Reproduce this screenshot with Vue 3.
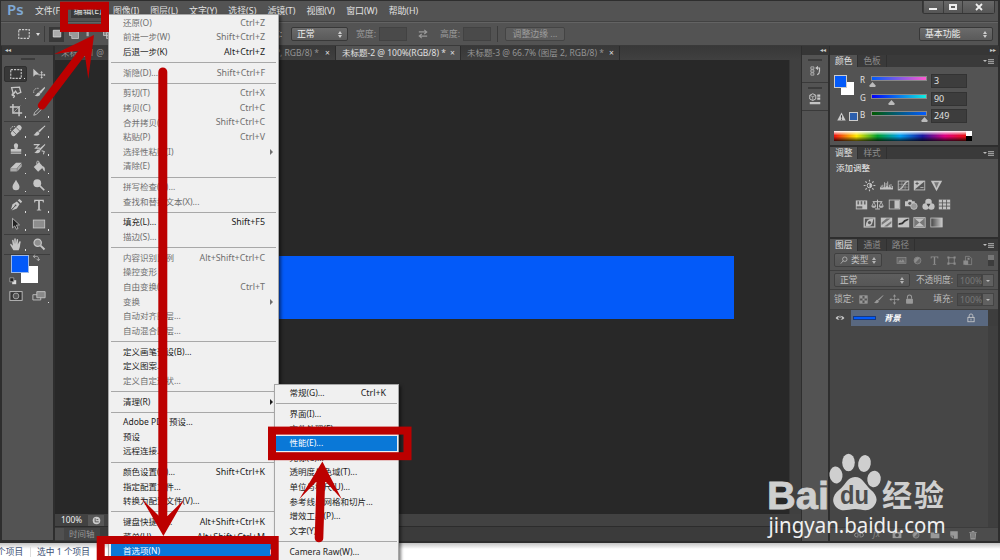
<script setup>
import { ref } from 'vue';

const menus = ['文件(F)', '编辑(E)', '图像(I)', '图层(L)', '文字(Y)', '选择(S)', '滤镜(T)', '视图(V)', '窗口(W)', '帮助(H)'];
const openMenu = ref('编辑(E)');

// off: disabled, sub: has a submenu, null: separator
const editMenu = [
  { text: '还原(O)', key: 'Ctrl+Z', off: true },
  { text: '前进一步(W)', key: 'Shift+Ctrl+Z', off: true },
  { text: '后退一步(K)', key: 'Alt+Ctrl+Z' },
  null,
  { text: '渐隐(D)...', key: 'Shift+Ctrl+F', off: true },
  null,
  { text: '剪切(T)', key: 'Ctrl+X', off: true },
  { text: '拷贝(C)', key: 'Ctrl+C', off: true },
  { text: '合并拷贝(Y)', key: 'Shift+Ctrl+C', off: true },
  { text: '粘贴(P)', key: 'Ctrl+V', off: true },
  { text: '选择性粘贴(I)', off: true, sub: true },
  { text: '清除(E)', off: true },
  null,
  { text: '拼写检查(H)...', off: true },
  { text: '查找和替换文本(X)...', off: true },
  null,
  { text: '填充(L)...', key: 'Shift+F5' },
  { text: '描边(S)...', off: true },
  null,
  { text: '内容识别比例', key: 'Alt+Shift+Ctrl+C', off: true },
  { text: '操控变形', off: true },
  { text: '自由变换(F)', key: 'Ctrl+T', off: true },
  { text: '变换', off: true, sub: true },
  { text: '自动对齐图层...', off: true },
  { text: '自动混合图层...', off: true },
  null,
  { text: '定义画笔预设(B)...' },
  { text: '定义图案...' },
  { text: '定义自定形状...', off: true },
  null,
  { text: '清理(R)', sub: true },
  null,
  { text: 'Adobe PDF 预设...' },
  { text: '预设' },
  { text: '远程连接...' },
  null,
  { text: '颜色设置(G)...', key: 'Shift+Ctrl+K' },
  { text: '指定配置文件...' },
  { text: '转换为配置文件(V)...' },
  null,
  { text: '键盘快捷键...', key: 'Alt+Shift+Ctrl+K' },
  { text: '菜单(U)...', key: 'Alt+Shift+Ctrl+M' },
  { text: '首选项(N)', sub: true, active: true },
];

const prefMenu = [
  { text: '常规(G)...', key: 'Ctrl+K' },
  null,
  { text: '界面(I)...' },
  { text: '文件处理(F)...' },
  { text: '性能(E)...', active: true },
  { text: '光标(C)...' },
  { text: '透明度与色域(T)...' },
  { text: '单位与标尺(U)...' },
  { text: '参考线、网格和切片...' },
  { text: '增效工具(P)...' },
  { text: '文字(Y)...' },
  null,
  { text: 'Camera Raw(W)...' },
];

const icons = {
  marquee: '<rect x="2" y="3" width="12" height="10" fill="none" stroke="currentColor" stroke-width="1.300" stroke-dasharray="2.500 1.200"/>',
  move: '<path d="M1.500 2v9l2.300-2.200L8.500 8.500z" fill="currentColor"/><path d="M11 5.500v7M7.500 9h7" stroke="currentColor" stroke-width="1"/><path d="M11 4.500l1.500 2h-3zM11 13.500l1.500-2h-3zM15.500 9l-2-1.500v3z" fill="currentColor"/>',
  lasso: '<path d="M3 3l9-.5 1.500 6-4 1.500-2-3-2.500 3.500zM5 10c-2 0-2 2 0 2s1.500 2-.5 2.500" fill="none" stroke="currentColor" stroke-width="1.500"/>',
  quick: '<path d="M14.500 2L8 8l2 2 5-6.500z" fill="currentColor"/><path d="M8.500 8.500c-3-.5-3 3-5.500 3.500 3 2 6.500.5 6.500-2z" fill="currentColor"/><path d="M2 9c-1-4 3-6 6-5" fill="none" stroke="currentColor" stroke-dasharray="1.500 1"/>',
  crop: '<path d="M4.500 1v10.500H15M1 4.500h10.500V15" fill="none" stroke="currentColor" stroke-width="1.700"/><path d="M5 11l8-8" stroke="currentColor" stroke-width=".7"/>',
  dropper: '<path d="M2 14l1-3 6-6 2 2-6 6z" fill="none" stroke="currentColor"/><path d="M8.500 4.500l1-.8L12 1.500c1.500-1 3.500 1 2.200 2.400L12 6l-.5 1.200z" fill="currentColor"/>',
  heal: '<g transform="rotate(-45 8 8)"><rect x="1" y="5" width="15" height="6" rx="3" fill="currentColor"/><path d="M5.500 5v6M11 5v6" stroke="#555" stroke-width=".8"/></g><path d="M2 8c-1-3 1-6 5-5" fill="none" stroke="currentColor" stroke-dasharray="1.500 1"/>',
  brush: '<path d="M15 1.500L7 8l1.500 1.800L15 2.500z" fill="currentColor"/><path d="M7 8.500c-3-.3-2.500 3-5.500 4 3.500 2 7 .5 7-2z" fill="currentColor"/>',
  stamp: '<path d="M8 1.500a2.500 2.500 0 012.300 3.300L9.500 8H14v3H2V8h4.500l-.8-3.200A2.500 2.500 0 018 1.500zM2 12h12v1.500H2z" fill="currentColor"/>',
  history: '<path d="M15 2L8 8l1.500 1.800L15 3.500zM8 8.500c-3-.3-2.500 2.500-5.500 3.500 3.500 2 7 .5 7-2z" fill="currentColor"/><path d="M2 3h6L4 7h5M11 10l3 1-1 3" fill="none" stroke="currentColor" stroke-width="1.200"/>',
  eraser: '<path d="M1.500 9.500L8 3h6.500L9 9.500z" fill="currentColor"/><path d="M1.500 9.500H9V13H1.500zM9.500 9.500L14.500 4v3.500L9.500 13z" fill="currentColor" opacity=".75"/>',
  bucket: '<path d="M2 8l6-5.500 5 5.500-6 5.500z" fill="currentColor"/><path d="M8 7V2.500C8 .8 5.500.8 5.500 2.500V5" fill="none" stroke="currentColor"/><path d="M12 7c3 1 3 3 2.500 6-1.500-1-2-3-3-4z" fill="currentColor"/>',
  blur: '<path d="M8 2c1 3 4 5 4 8a4 4 0 01-8 0c0-3 3-5 4-8z" fill="currentColor"/>',
  dodge: '<circle cx="6" cy="6" r="4.500" fill="currentColor"/><path d="M9 9l5 5" stroke="currentColor" stroke-width="2"/>',
  pen: '<path d="M2 14L4 7l5-3 3 3-3 5-6 2.300L7.500 9" fill="currentColor"/><path d="M10 2.500l3.500 3.500L15 4 12 1z" fill="currentColor"/><path d="M2 14l5-5" stroke="#555"/><circle cx="7.500" cy="8.500" r="1" fill="#555"/>',
  type: '<path d="M2.500 2h11v3h-1l-.5-1.700H9V13l1.500.5v.7h-5v-.7L7 13V3.300H4L3.500 5h-1z" fill="currentColor"/>',
  select: '<path d="M4 1.500v11l2.500-2.300L8.500 14l1.800-.9-1.800-3.800L12 9z" fill="#222" stroke="currentColor" stroke-width=".9"/>',
  rect: '<rect x="1.500" y="3.500" width="13" height="9" fill="#8d8d8d" stroke="currentColor"/>',
  hand: '<path d="M5 15L1.500 9c-.5-1.500 1-1.500 1.500-.5L4.500 10 3.500 4c0-1.300 1.500-1.300 1.700 0l.8 4V2.500c0-1.300 1.800-1.300 1.800 0V8l.9-5c.3-1.300 1.800-1 1.700.3L10 8.500l1.800-3.300c.7-1 1.900-.3 1.500.8C12.500 8.500 13 12 11 15z" fill="currentColor"/>',
  zoom: '<circle cx="6.500" cy="6.500" r="4.200" fill="#8f8f8f" stroke="currentColor" stroke-width="1.400"/><path d="M9.800 9.800l4.500 4.500" stroke="currentColor" stroke-width="2.200"/>',
  quickmask: '<rect x="1" y="3" width="14" height="10" fill="#353535" stroke="currentColor"/><circle cx="8" cy="8" r="3.300" fill="#555" stroke="currentColor" stroke-width=".8"/>',
  screen: '<path d="M1 6.500h9v6H1z" fill="#555" stroke="currentColor"/><path d="M5.500 3h9.500v7H5.500z" fill="#888" stroke="currentColor"/>',
  sun: '<circle cx="8" cy="8" r="2.800" fill="none" stroke="currentColor" stroke-width="1.200"/><path d="M8 5.200v5.600a2.800 2.800 0 000-5.600z" fill="currentColor"/><path d="M8 .8v2.400M8 12.800v2.400M.8 8h2.400M12.800 8h2.400M3 3l1.600 1.600M11.400 11.400L13 13M13 3l-1.600 1.600M4.600 11.400L3 13" stroke="currentColor" stroke-width="1.400"/>',
  levels: '<path d="M0 13h16V8.500h-1V11h-1V6h-1v4h-1V7h-1v3h-1V3H9v6H8V5H7v5H6V4H5v6H4V7H3v4H2V8H1v2H0z" fill="currentColor"/>',
  curves: '<rect x="1.500" y="2.500" width="13" height="11" fill="none" stroke="currentColor"/><path d="M6 3v10M10 3v10M2 6.500h12M2 10h12" stroke="currentColor" stroke-width=".5"/><path d="M2 13c6 0 6-10 12-10" fill="none" stroke="currentColor" stroke-width="1.400"/>',
  exposure: '<path d="M1 2h14v12H1z" fill="currentColor"/><path d="M14 3v10H2z" fill="#555"/><path d="M3 5.500h4M5 3.500v4" stroke="#555" stroke-width="1.200"/><path d="M9 10.500h4" stroke="currentColor"/>',
  vibrance: '<path d="M1 2h14L8 15z" fill="currentColor"/><path d="M5 4h6l-3 7z" fill="#777"/>',
  hue: '<rect x="1" y="3" width="14" height="11" fill="currentColor"/><path d="M3 4h2v4H3zM7 4h2v4H7zM11 4h2v4h-2zM2 10h7v3H2z" fill="#666"/>',
  balance: '<path d="M8 2v11M2 4.500h12M5 13.500h6" stroke="currentColor" stroke-width="1.200"/><path d="M3.500 5L1 10h5zM12.500 5L10 10h5z" fill="none" stroke="currentColor"/><path d="M.5 10h6c-1 2.500-5 2.500-6 0zM9.500 10h6c-1 2.500-5 2.500-6 0z" fill="currentColor"/>',
  bw: '<rect x="1.500" y="2.500" width="13" height="11" fill="#555" stroke="currentColor"/><path d="M8 3h6v10H8z" fill="currentColor"/>',
  photo: '<path d="M0 4h3l1-2h4l1 2h3v6H0z" fill="currentColor"/><circle cx="6" cy="6.500" r="2" fill="#555"/><circle cx="11" cy="10" r="4" fill="#999" stroke="currentColor"/>',
  mixer: '<circle cx="8" cy="5" r="4" fill="currentColor"/><circle cx="4.500" cy="10.500" r="4" fill="currentColor"/><circle cx="11.500" cy="10.500" r="4" fill="currentColor"/><path d="M5.500 7h5L8 11z" fill="#444"/>',
  lookup: '<rect x="1" y="2" width="14" height="12" fill="currentColor"/><path d="M5.500 2v12M10.500 2v12M1 6h14M1 10h14" stroke="#555"/>',
  invert: '<rect x="1.500" y="2.500" width="13" height="11" fill="#555" stroke="currentColor" stroke-width="1.600"/><path d="M13 3v1c-1 1-1 7-4 8-2 1-4 0-6 1 1-2 0-4 2-7 2-3 5-2 8-3z" fill="currentColor"/><circle cx="8" cy="8" r="2" fill="#555"/>',
  poster: '<rect x="1" y="2" width="14" height="12" fill="currentColor"/><path d="M2 8l6-5h5L2 11zM5 13l9-7v3l-5 4z" fill="#777"/>',
  threshold: '<rect x="1" y="2" width="14" height="12" fill="currentColor"/><path d="M2 9l4-1 3-3 5-2v2l-4 2-3 3-5 1z" fill="#333"/>',
  selective: '<rect x="1" y="2" width="14" height="12" fill="#777" stroke="currentColor"/><path d="M2 3l6 5 6-5M2 13l6-5 6 5z" fill="currentColor"/>',
  gradmap: '<rect x="1" y="2.500" width="14" height="11" fill="url(#gm)" stroke="currentColor"/>',
  image: '<rect x="1.500" y="3.500" width="13" height="9" fill="#666" stroke="currentColor"/><path d="M3 11l3-4 2 2 2-3 3 5z" fill="currentColor"/>',
  adjust: '<circle cx="8" cy="8" r="5" fill="#666" stroke="currentColor"/><path d="M4.500 11.500a5 5 0 017-7z" fill="currentColor"/>',
  shape: '<rect x="4" y="4" width="8" height="8" fill="none" stroke="currentColor" stroke-width="1.200"/><path d="M2 2h3v3H2zM11 2h3v3h-3zM2 11h3v3H2zM11 11h3v3h-3z" fill="currentColor"/>',
  smart: '<path d="M5 2h6l3 3v9H5z" fill="none" stroke="currentColor"/><path d="M2 8h7v6H2zM8 4h3v3H8z" fill="currentColor"/>',
  pixels: '<rect x="2.500" y="2.500" width="11" height="11" fill="none" stroke="currentColor"/><path d="M3 3h3.500v3.500H3zM9.500 3H13v3.500H9.500zM6.500 6.500h3v3h-3zM3 9.500h3.500V13H3zM9.500 9.500H13V13H9.500z" fill="currentColor"/>',
  cross: '<path d="M8 2v12M2 8h12" stroke="currentColor"/><path d="M8 .5l2.300 3H5.700zM8 15.500l2.300-3H5.700zM.5 8l3-2.300v4.600zM15.500 8l-3-2.300v4.600z" fill="currentColor"/>',
  lock: '<rect x="3" y="7" width="10" height="7" rx="1" fill="currentColor"/><path d="M5 7V4.500a3 3 0 016 0V7" fill="none" stroke="currentColor" stroke-width="1.500"/>',
  lockline: '<rect x="3" y="7" width="10" height="7" fill="none" stroke="currentColor" stroke-width="1.300"/><path d="M5 7V4.500a3 3 0 016 0V7M8 9v3" fill="none" stroke="currentColor" stroke-width="1.300"/>',
  eye: '<path d="M1 8c3-5 11-5 14 0-3 4.500-11 4.500-14 0z" fill="currentColor"/><circle cx="8" cy="8" r="3" fill="#444"/><circle cx="8" cy="7" r="1" fill="currentColor"/>',
  link: '<path d="M7 5H4a3 3 0 000 6h3M9 5h3a3 3 0 010 6H9M5 8h6" fill="none" stroke="currentColor" stroke-width="1.400"/>',
  mask: '<path d="M1 3h14v10H1z" fill="currentColor"/><circle cx="8" cy="8" r="3" fill="#4a4a4a"/>',
  folder: '<path d="M1 4h5l1 1.500h8V13H1z" fill="currentColor"/>',
  newlayer: '<path d="M2 2h12v12H8V9H2z" fill="currentColor"/><path d="M2 10h5v4z" fill="currentColor"/>',
  trash: '<path d="M3 5h10l-1 10H4zM2 3h12v1.300H2zM6 1.500h4V3H6z" fill="currentColor"/><path d="M6 6v7M8 6v7M10 6v7" stroke="#4a4a4a" stroke-width=".7"/>',
  historypanel: '<path d="M2.500 2.500h4v3h-4zM2.500 6.500h4v3h-4zM2.500 10.500h4v3h-4z" fill="none" stroke="currentColor"/><path d="M9 4h5v4c0 3-1 4-3 5" fill="none" stroke="currentColor" stroke-width="1.600"/><path d="M12 1L8.500 4 12 7z" fill="currentColor"/>',
  props: '<path d="M5 1l4 2v5L5 10 1 8V3z" fill="none" stroke="currentColor" stroke-width="1.300"/><path d="M1 3l4 2 4-2M5 5v5" fill="none" stroke="currentColor"/><path d="M11 2h4v3h-4zM11 6h4v3h-4zM1 12h14v3H1z" fill="currentColor"/>',
};

const toolGroups = [
  ['marquee', 'move', 'lasso', 'quick', 'crop', 'dropper'],
  ['heal', 'brush', 'stamp', 'history', 'eraser', 'bucket', 'blur', 'dodge'],
  ['pen', 'type', 'select', 'rect'],
  ['hand', 'zoom'],
];

const channels = ref([
  { name: 'R', value: 3, max: 255 },
  { name: 'G', value: 90, max: 255 },
  { name: 'B', value: 249, max: 255 },
]);

const adjustments = [
  ['sun', 'levels', 'curves', 'exposure', 'vibrance'],
  ['hue', 'balance', 'bw', 'photo', 'mixer', 'lookup'],
  ['invert', 'poster', 'threshold', 'selective', 'gradmap'],
];
</script>

<template>
  <div class="desktop">
    <div class="app">
      <header class="menubar">
        <span class="logo">Ps</span>
        <nav>
          <span v-for="m in menus" :key="m" :class="{ open: m === openMenu }">{{ m }}</span>
        </nav>
        <div class="winbtns">
          <i><svg viewBox="0 0 10 8"><path d="M1 5h8v2H1z" fill="#eee" /></svg></i>
          <i><svg viewBox="0 0 10 8"><path d="M2 2h6v4H2z" fill="none" stroke="#eee" stroke-width="2" /></svg></i>
          <i class="wide"><svg viewBox="0 0 10 8"><path d="M2 1l6 6M8 1L2 7" stroke="#eee" stroke-width="1.800" /></svg></i>
        </div>
      </header>

      <div class="options">
        <svg class="opt-tool" viewBox="0 0 16 16" v-html="icons.marquee"></svg>
        <b class="caret"></b>
        <i class="vline"></i>
        <div class="modes">
          <i class="on"><svg viewBox="0 0 16 16"><path d="M3 3h10v9H3z" fill="#aaa" stroke="#ddd" /></svg></i>
          <i><svg viewBox="0 0 16 16"><path d="M2 2h9v3h3v9H5v-4H2z" fill="#999" stroke="#ccc" /></svg></i>
          <i><svg viewBox="0 0 16 16"><path d="M2 2h8v2H5v7H2z" fill="#aaa" /></svg></i>
          <i><svg viewBox="0 0 16 16"><path d="M2 2h8v8H2zM6 6h8v8H6z" fill="#888" stroke="#ccc" /></svg></i>
        </div>
        <span class="style-label">样式:</span>
        <span class="select normal">正常<em class="ud"></em></span>
        <span class="dim w-label">宽度:</span>
        <i class="field"></i>
        <svg class="swap" viewBox="0 0 12 12"><path d="M1 3.500h9M7.500 1L10.500 3.500 7.500 6M11 8.500H2M4.500 6L1.500 8.500 4.500 11" fill="none" stroke="#999" stroke-width="1.400" /></svg>
        <span class="dim">高度:</span>
        <i class="field"></i>
        <i class="vline second"></i>
        <span class="edge-btn">调整边缘 ...</span>
        <span class="select workspace">基本功能<em class="ud"></em></span>
      </div>

      <div class="main">
        <aside class="tools">
          <div class="tools-head">◂◂</div>
          <div class="grip"></div>
          <div v-for="(g, gi) in toolGroups" :key="gi" class="tool-group">
            <div v-for="t in g" :key="t" class="tool" :class="{ selected: t === 'marquee' }">
              <svg viewBox="0 0 16 16" v-html="icons[t]"></svg>
              <b v-if="t !== 'move' && t !== 'zoom'"></b>
            </div>
          </div>
          <div class="swatches">
            <i class="bg"></i>
            <i class="fg"></i>
            <svg class="flip" viewBox="0 0 10 10"><path d="M2 3h4c1 0 2 1 2 2v3M4 .8L1.500 3 4 5.200M5.800 6L8 8.500 10 6" fill="none" stroke="#bbb" /></svg>
            <svg class="reset" viewBox="0 0 10 10"><path d="M4 4h5v5H4z" fill="#ddd" /><path d="M1 1h5v5H1z" fill="#222" stroke="#aaa" /></svg>
          </div>
          <div class="tool-group last">
            <div class="tool"><svg viewBox="0 0 16 16" v-html="icons.quickmask"></svg></div>
            <div class="tool"><svg viewBox="0 0 16 16" v-html="icons.screen"></svg><b></b></div>
          </div>
        </aside>

        <section class="document">
          <div class="tabs">
            <div class="tab first"><span>未标题-1 @</span><span>?, RGB/8) *</span><u>×</u></div>
            <div class="tab current"><span>未标题-2 @ 100%(RGB/8) *</span><u>×</u></div>
            <div class="tab third"><span>未标题-3 @ 66.7% (图层 2, RGB/8) *</span><u>×</u></div>
          </div>
          <div class="view">
            <div class="canvas"><div class="art"></div></div>
            <div class="vscroll"></div>
          </div>
          <div class="status">
            <span>100%</span>
            <i><svg viewBox="0 0 10 10"><circle cx="5" cy="5" r="4.200" fill="#ccc" /><path d="M3.500 2.500v4h4M5 4h2" fill="none" stroke="#555" /></svg></i>
          </div>
          <div class="timeline"><i></i><span>时间轴</span></div>
        </section>

        <aside class="dock">
          <div class="dock-head">◂◂</div>
          <div class="dock-cell"><i></i><svg viewBox="0 0 16 16" v-html="icons.historypanel"></svg></div>
          <div class="dock-cell"><i></i><svg viewBox="0 0 16 16" v-html="icons.props"></svg></div>
          <div class="dock-rest"></div>
        </aside>

        <aside class="panels">
          <div class="dock-head right">▸▸</div>

          <div class="panel color">
            <div class="ptabs"><span class="on">颜色</span><span>色板</span><em class="pmenu"></em></div>
            <div class="pbody">
              <div class="color-row">
                <div class="chips">
                  <i class="white"></i>
                  <i class="blue"></i>
                  <svg class="warn" viewBox="0 0 10 10"><path d="M5 .5L9.700 9.500H.3z" fill="#ccc" /><path d="M5 3.500v3M5 7.300v1.200" stroke="#333" stroke-width="1.200" /></svg>
                  <i class="gamut"></i>
                </div>
                <div class="sliders">
                  <div v-for="c in channels" :key="c.name" class="slider">
                    <label>{{ c.name }}</label>
                    <div class="track" :class="c.name.toLowerCase()">
                      <svg class="thumb" viewBox="0 0 8 6" :style="{ left: (c.value / c.max) * 100 + '%' }"><path d="M4 0l3.500 4v2H.5V4z" fill="#bbb" /></svg>
                    </div>
                    <span class="num">{{ c.value }}</span>
                  </div>
                </div>
              </div>
              <div class="ramp"><i class="hues"></i><i class="ends"></i></div>
            </div>
          </div>

          <div class="panel adjust">
            <div class="ptabs"><span class="on">调整</span><span>样式</span><em class="pmenu"></em></div>
            <div class="pbody">
              <p>添加调整</p>
              <div v-for="(row, ri) in adjustments" :key="ri" class="adj-row">
                <svg v-for="a in row" :key="a" viewBox="0 0 16 16" v-html="icons[a]"></svg>
              </div>
            </div>
          </div>

          <div class="panel layers">
            <div class="ptabs"><span class="on">图层</span><span>通道</span><span>路径</span><em class="pmenu"></em></div>
            <div class="lrow filter">
              <span class="select kind"><svg viewBox="0 0 10 10"><circle cx="6" cy="4" r="2.800" fill="none" stroke="#bbb" /><path d="M4 6L1 9.500" stroke="#bbb" /></svg>类型<em class="ud"></em></span>
              <svg v-for="f in ['image', 'adjust', 'type', 'shape', 'smart']" :key="f" viewBox="0 0 16 16" v-html="icons[f]"></svg>
              <i class="toggle"></i>
            </div>
            <div class="lrow">
              <span class="select blend">正常<em class="ud"></em></span>
              <span class="llabel">不透明度:</span>
              <span class="pct">100%</span><b class="drop"></b>
            </div>
            <div class="lrow lockrow">
              <span>锁定:</span>
              <svg v-for="f in ['pixels', 'brush', 'cross', 'lock']" :key="f" viewBox="0 0 16 16" v-html="icons[f]"></svg>
              <span class="llabel">填充:</span>
              <span class="pct">100%</span><b class="drop"></b>
            </div>
            <div class="layer">
              <svg class="eye" viewBox="0 0 16 16" v-html="icons.eye"></svg>
              <div class="layer-main">
                <i class="thumbnail"></i>
                <em>背景</em>
                <svg viewBox="0 0 16 16" v-html="icons.lockline"></svg>
              </div>
              <div class="lscroll"></div>
            </div>
            <div class="layer-empty"><i></i></div>
            <div class="lfoot">
              <svg viewBox="0 0 16 16" v-html="icons.link"></svg>
              <span>fx</span>
              <svg v-for="f in ['mask', 'adjust', 'folder', 'newlayer', 'trash']" :key="f" viewBox="0 0 16 16" v-html="icons[f]"></svg>
            </div>
          </div>
        </aside>
      </div>
    </div>

    <footer class="explorer"><span>个项目</span><i></i><span>选中 1 个项目</span></footer>

    <div class="menu edit">
      <template v-for="(item, i) in editMenu" :key="i">
        <hr v-if="!item">
        <div v-else class="item" :class="{ off: item.off, active: item.active }">
          <span>{{ item.text }}</span>
          <kbd v-if="item.key">{{ item.key }}</kbd>
          <b v-if="item.sub"></b>
        </div>
      </template>
    </div>

    <div class="menu pref">
      <template v-for="(item, i) in prefMenu" :key="i">
        <hr v-if="!item">
        <div v-else class="item" :class="{ active: item.active }">
          <span>{{ item.text }}</span>
          <kbd v-if="item.key">{{ item.key }}</kbd>
        </div>
      </template>
    </div>

    <svg class="overlay" viewBox="0 0 1000 560">
      <defs>
        <linearGradient id="gm"><stop offset="0" stop-color="#444" /><stop offset="1" stop-color="#ccc" /></linearGradient>
      </defs>
      <!-- red marks -->
      <g fill="none" stroke="#bc0000" stroke-width="8">
        <rect x="64" y="5.700" width="41" height="22.300" />
        <rect x="100.700" y="540" width="174" height="20" />
        <rect x="272" y="430.600" width="135.500" height="25.600" />
        <g stroke-linecap="round">
          <path d="M42 105.500L84 50" />
          <path d="M162.800 72V520" stroke-width="9" />
          <path d="M319 538L321 476" stroke-width="8.600" />
        </g>
      </g>
      <g fill="#bc0000">
        <path d="M94 35L54 54.300 79 50.500 85 56 88.300 79z" />
        <path d="M163.400 536L142 499 159 516H167.500L184.300 499.500z" />
        <path d="M322.400 461.500L299.200 499.200 316 482H326L341.800 499.200z" />
      </g>
      <!-- watermark -->
      <g fill="#cfcfcf">
        <text x="767" y="508.500" class="wm-bai" textLength="62" lengthAdjust="spacingAndGlyphs">Bai</text>
        <ellipse cx="836" cy="475" rx="6.500" ry="8.500" transform="rotate(-8 836 475)" />
        <ellipse cx="848.500" cy="462.500" rx="6.300" ry="8.800" />
        <ellipse cx="864.500" cy="463.500" rx="6.300" ry="8.500" transform="rotate(10 864.500 463.500)" />
        <ellipse cx="874" cy="479" rx="6.700" ry="8.300" transform="rotate(8 874 479)" />
        <path d="M855 477c8 0 10 8 16 13 5 4 8 10 3 16-6 7-12 3-19 3s-13 4-19-2c-5-6-3-12 3-17 6-4 8-13 16-13z" />
        <text x="840" y="503.500" class="wm-du" textLength="29" lengthAdjust="spacingAndGlyphs">du</text>
        <text x="882" y="505.500" class="wm-cn" textLength="62">经验</text>
      </g>
      <text x="768.500" y="532.500" class="wm-url" textLength="177" lengthAdjust="spacingAndGlyphs">jingyan.baidu.com</text>
    </svg>
  </div>
</template>

<style>
body {
  background: #fff;
  overflow: hidden;
}
</style>

<style scoped>
* {
  box-sizing: border-box;
}
.desktop {
  position: relative;
  width: 1000px;
  height: 560px;
  overflow: hidden;
  display: flex;
  flex-direction: column;
  font-family: "Noto Sans", "Noto Sans CJK SC", sans-serif;
  font-size: 8.9px;
  line-height: 1;
  color: #e2e2e2;
  white-space: nowrap;
}
svg {
  display: block;
  flex: none;
}
i {
  display: block;
  flex: none;
}
.app {
  height: 543px;
  flex: none;
  display: flex;
  flex-direction: column;
  background: #535353;
  border: solid #2e2e2e;
  border-width: 1px 2px 2px 1px;
}
/* menu bar */
.menubar {
  height: 21px;
  flex: none;
  display: flex;
  border-bottom: 1px solid #424242;
}
.logo {
  width: 34px;
  padding: 1px 0 0 6px;
  font-size: 15px;
  font-weight: 600;
  color: #7fa8d4;
}
.menubar nav {
  display: flex;
  align-items: center;
  gap: 11.150px;
}
.menubar .open {
  background: #3a3a3a;
  box-shadow: 0 0 0 3px #3a3a3a;
}
.winbtns {
  margin-left: auto;
  margin-right: 3px;
  height: 13px;
  display: flex;
  border: 1px solid #353535;
  border-top: 0;
  border-radius: 0 0 3px 3px;
}
.winbtns i {
  width: 19.500px;
  display: flex;
  align-items: center;
  justify-content: center;
  background: linear-gradient(#686868, #565656);
  border-left: 1px solid #3c3c3c;
}
.winbtns i.wide {
  width: 32px;
}
.winbtns svg {
  width: 10px;
  height: 8px;
}
/* options bar */
.options {
  height: 24px;
  flex: none;
  display: flex;
  align-items: center;
  padding-left: 16px;
  border-top: 1px solid #636363;
  border-bottom: 1px solid #3a3a3a;
}
.opt-tool {
  width: 14px;
  height: 14px;
  color: #ccc;
}
.caret {
  margin-left: 5px;
  border: 2px solid transparent;
  border-top: 3px solid #ddd;
  border-bottom: 0;
}
.vline {
  width: 1px;
  height: 16px;
  margin-left: 4px;
  background: #3c3c3c;
}
.modes {
  display: flex;
  gap: 2px;
  margin-left: 4px;
  width: 213px;
}
.modes i {
  width: 15px;
  height: 15px;
  padding: 1.500px;
}
.modes .on {
  background: #383838;
}
.modes svg {
  width: 12px;
  height: 12px;
}
.style-label {
  width: 29px;
}
.select {
  display: flex;
  align-items: center;
  height: 14px;
  padding: 0 4px 0 5px;
  background: linear-gradient(#6b6b6b, #5a5a5a);
  border: 1px solid #383838;
  border-radius: 2px;
  color: #eee;
}
.ud {
  width: 5px;
  height: 7px;
  margin-left: auto;
}
.ud::before,
.ud::after {
  content: "";
  display: block;
  border: 2px solid transparent;
  border-top: 0;
  border-bottom: 3px solid #ccc;
  width: 0;
}
.ud::after {
  margin-top: 1px;
  transform: rotate(180deg);
}
.normal {
  width: 57px;
  margin-right: 8px;
}
.dim {
  color: #9a9a9a;
  width: 23px;
}
.field {
  width: 28px;
  height: 14px;
  background: #4a4a4a;
  border: 1px solid #424242;
}
.swap {
  width: 10px;
  height: 10px;
  margin: 0 12px 0 11px;
}
.second {
  margin-left: 6px;
}
.edge-btn {
  width: 60px;
  height: 14px;
  margin-left: 7px;
  display: flex;
  align-items: center;
  justify-content: center;
  border: 1px solid #444;
  border-radius: 2px;
  background: #5c5c5c;
  color: #9c9c9c;
}
.workspace {
  width: 74px;
  margin-left: auto;
  margin-right: 5px;
}
/* work area */
.main {
  flex: 1;
  min-height: 0;
  display: flex;
  background: #2e2e2e;
}
.tools {
  width: 51px;
  margin: 0 2px 1px 1px;
  background: #535353;
}
.tools-head,
.dock-head {
  height: 9px;
  background: #363636;
  color: #ccc;
  font-size: 6px;
  line-height: 8px;
  padding-left: 3px;
}
.grip {
  width: 14px;
  height: 2px;
  margin: 3px auto 5px;
  background: #3c3c3c;
}
.tool-group {
  display: grid;
  grid-template-columns: 23px 23px;
  grid-auto-rows: 18.200px;
  margin: 0 3px 0 2px;
  padding-bottom: 1px;
  border-bottom: 1px solid #3d3d3d;
}
.tool {
  position: relative;
  display: flex;
  align-items: center;
  justify-content: center;
  color: #c6c6c6;
}
.tool svg {
  width: 14px;
  height: 14px;
}
.tool b {
  position: absolute;
  right: 1px;
  bottom: 2px;
  width: 1.500px;
  height: 1.500px;
  background: #ddd;
}
.selected {
  background: #383838;
  border: 1px solid #2f2f2f;
  border-radius: 2px;
  margin: 1px 0;
}
.swatches {
  position: relative;
  width: 32px;
  height: 33px;
  margin: -1px 0 0 8px;
}
.swatches i {
  position: absolute;
  width: 17px;
  height: 17px;
}
.swatches .fg {
  left: 1px;
  top: 1px;
  width: 18px;
  height: 18px;
  background: #035af9;
  border: 1px solid #9db8e6;
}
.swatches .bg {
  left: 11px;
  top: 12px;
  background: #fff;
}
.flip {
  position: absolute;
  left: 22px;
  top: 0;
  width: 8px;
  height: 8px;
}
.reset {
  position: absolute;
  left: -1px;
  top: 23px;
  width: 8px;
  height: 8px;
}
.last {
  border: 0;
}
.document {
  flex: 1;
  min-width: 0;
  display: flex;
  flex-direction: column;
}
.tabs {
  height: 14px;
  display: flex;
  background: linear-gradient(#383838, #404040);
  font-size: 8.500px;
}
.tab {
  display: flex;
  align-items: center;
  color: #949494;
  padding: 0 4px 0 6px;
  border-right: 1px solid #2c2c2c;
}
.tab u {
  width: 6px;
  margin-left: 6px;
  text-decoration: none;
  color: #ddd;
}
.first {
  width: 281px;
}
.first span:nth-child(2) {
  margin-left: auto;
}
.current {
  width: 125px;
  background: #535353;
  color: #e0e0e0;
}
.current u,
.third u {
  margin-left: auto;
}
.third {
  width: 159px;
}
.view {
  flex: 1;
  display: flex;
}
.canvas {
  flex: 1;
  display: flex;
  align-items: center;
  justify-content: center;
  background: #282828;
}
.art {
  width: 623px;
  height: 63px;
  background: #035af9;
}
.vscroll {
  width: 12px;
  background: #404040;
  border-left: 1px solid #353535;
}
.status {
  height: 12px;
  display: flex;
  align-items: center;
  padding-left: 6px;
  background: #424242;
  font-size: 8.300px;
}
.status span {
  width: 27px;
  color: #eee;
}
.status i {
  width: 16px;
  height: 11px;
  padding: 1px 4px;
  background: #575757;
}
.status svg {
  width: 9px;
  height: 9px;
}
.timeline {
  height: 15px;
  display: flex;
  align-items: center;
  background: #3b3b3b;
  border-top: 1px solid #2c2c2c;
  color: #999;
  font-size: 8.500px;
}
.timeline i {
  width: 9px;
  height: 12px;
  background: #505050;
}
.timeline span {
  padding: 2px 5px;
  background: #454545;
}
/* collapsed icons */
.dock {
  width: 26px;
  margin-left: 1px;
  display: flex;
  flex-direction: column;
  background: #535353;
}
.dock-head {
  text-align: right;
  padding-right: 3px;
  margin-right: -1px;
  flex: none;
}
.dock-cell {
  height: 28px;
  padding-top: 4px;
  border-bottom: 1px solid #3a3a3a;
}
.dock-cell i {
  width: 14px;
  height: 2px;
  margin: 0 auto 4px;
  background: #3c3c3c;
}
.dock-cell svg {
  width: 12px;
  height: 12px;
  margin: 0 auto;
  color: #c4c4c4;
}
/* panels */
.panels {
  width: 168px;
  margin-left: 2px;
  display: flex;
  flex-direction: column;
}
.panel {
  margin-bottom: 2px;
  background: #535353;
}
.ptabs {
  height: 12px;
  display: flex;
  align-items: stretch;
  background: #3a3a3a;
  padding-right: 4px;
  font-size: 8.700px;
}
.ptabs span {
  padding: 2px 5px 0;
  border-right: 1px solid #303030;
  color: #8c8c8c;
}
.ptabs .on {
  background: #535353;
  color: #e0e0e0;
}
.pmenu {
  position: relative;
  width: 6px;
  height: 5px;
  margin: 4px 0 0 auto;
  background: repeating-linear-gradient(#999 0 1px, #555 1px 2px);
}
.pmenu::before {
  content: "";
  position: absolute;
  left: -5px;
  top: 1px;
  border: 2px solid transparent;
  border-top: 2px solid #bbb;
}
.color {
  height: 90px;
}
.color-row {
  display: flex;
  padding: 7px 0 0 4px;
  height: 63px;
}
.chips {
  position: relative;
  width: 20px;
  height: 50px;
}
.chips i {
  position: absolute;
}
.chips .blue {
  left: 0;
  top: 1px;
  width: 13px;
  height: 13px;
  background: #035af9;
  border: 1px solid #ccc;
}
.chips .white {
  left: 7px;
  top: 8px;
  width: 13px;
  height: 13px;
  background: #fff;
}
.warn {
  position: absolute;
  left: 3px;
  top: 38px;
  width: 9px;
  height: 9px;
}
.chips .gamut {
  left: 15px;
  top: 38px;
  width: 9px;
  height: 9px;
  background: #2c5fae;
  border: 1px solid #ccc;
}
.sliders {
  display: flex;
  flex-direction: column;
  gap: 3.600px;
  margin-left: 6px;
}
.slider {
  display: flex;
  height: 14px;
}
.slider label {
  width: 11px;
  padding-top: 2px;
  font-size: 8px;
}
.track {
  position: relative;
  width: 56px;
  height: 5px;
  margin: 2px 4px 0 0;
  border: 1px solid #888;
}
.track.r {
  background: linear-gradient(90deg, #005af9, #ff5ad0);
}
.track.g {
  background: linear-gradient(90deg, #0300f9, #10f0e0);
}
.track.b {
  background: linear-gradient(90deg, #035a00, #035aff);
}
.thumb {
  position: absolute;
  top: 5px;
  width: 7px;
  height: 5px;
  margin-left: -3.500px;
}
.num {
  width: 36px;
  height: 14px;
  padding: 2px 2px 0;
  background: #3d3d3d;
  border: 1px solid #333;
}
.ramp {
  display: flex;
  width: 138px;
  height: 10px;
  margin: 1px 0 0 4px;
}
.hues {
  flex: 1;
  background: linear-gradient(#fff, transparent 45%, transparent 55%, rgba(0, 0, 0, 0.75)), linear-gradient(90deg, #f01010, #ffe800 17%, #00a030 33%, #00a0f0 50%, #1818a0 67%, #e00080 84%, #e81010);
}
.ends {
  width: 6px;
  background: linear-gradient(#fff 50%, #000 50%);
}
.adjust {
  height: 90px;
}
.adjust p {
  margin: 0;
  padding: 5px 0 7px 6px;
  height: 20px;
  font-size: 8.500px;
  color: #eee;
}
.adj-row {
  display: flex;
  justify-content: center;
  gap: 3.800px;
  height: 18.700px;
  padding-right: 22px;
  color: #c2c2c2;
}
.adj-row svg {
  width: 13px;
  height: 13px;
}
.layers {
  flex: 1;
  display: flex;
  flex-direction: column;
  margin-bottom: 0;
}
.lrow {
  height: 19.700px;
  flex: none;
  display: flex;
  align-items: center;
  padding: 0 4px 0 4px;
  border-bottom: 1px solid #3f3f3f;
  color: #bbb;
  font-size: 8.700px;
}
.lrow .select {
  background: linear-gradient(#5e5e5e, #565656);
  border-color: #404040;
  color: #c2c2c2;
}
.lrow .ud {
  opacity: 0.8;
}
.kind {
  width: 48px;
  margin-right: 8px;
}
.kind svg {
  width: 8px;
  height: 8px;
  margin-right: 3px;
}
.filter > svg {
  width: 11px;
  height: 11px;
  margin: 0 0 0 5.700px;
  color: #8d8d8d;
}
.toggle {
  width: 6px;
  height: 11px;
  margin-left: auto;
  background: linear-gradient(#777 50%, #3c3c3c 50%);
}
.blend {
  width: 76px;
}
.llabel {
  margin-left: auto;
  margin-right: 4px;
}
.pct {
  width: 25px;
  height: 13px;
  padding: 2px 2px 0;
  background: #4b4b4b;
  border: 1px solid #424242;
  color: #777;
}
.drop {
  width: 12px;
  height: 13px;
  padding: 5px 3px;
  background: #606060;
  border: 1px solid #444;
}
.drop::after {
  content: "";
  display: block;
  border: 2px solid transparent;
  border-top: 2px solid #bbb;
  width: 0;
}
.lockrow svg {
  width: 11px;
  height: 11px;
  margin-left: 4.300px;
  color: #999;
}
.layer {
  height: 16px;
  flex: none;
  display: flex;
  background: #464646;
}
.eye {
  width: 10px;
  height: 10px;
  margin: 3px 6px 3px 5px;
  color: #c4c4c4;
}
.layer-main {
  flex: 1;
  display: flex;
  align-items: center;
  padding: 0 12px 0 2px;
  background: #596880;
}
.thumbnail {
  width: 23px;
  height: 4px;
  background: #035af9;
  border: 1px solid #173a80;
}
.layer-main em {
  margin-left: 8px;
  font-size: 8.300px;
  font-weight: 600;
  color: #fff;
}
.layer-main svg {
  width: 10px;
  height: 10px;
  margin-left: auto;
  color: #ccc;
}
.lscroll {
  width: 10px;
  background: #3d3d3d;
}
.layer-empty {
  flex: 1;
  display: flex;
  justify-content: flex-end;
  background: #464646;
}
.layer-empty i {
  width: 10px;
  background: #3f3f3f;
}
.lfoot {
  height: 14px;
  flex: none;
  display: flex;
  align-items: center;
  justify-content: flex-end;
  gap: 9px;
  padding-right: 20px;
  background: #4c4c4c;
  border-top: 1px solid #3c3c3c;
  color: #999;
}
.lfoot svg {
  width: 10px;
  height: 10px;
}
.lfoot span {
  width: 10px;
  font-style: italic;
  color: #888;
}
/* strip under the window */
.explorer {
  flex: 1;
  display: flex;
  align-items: center;
  padding-top: 1px;
  background: linear-gradient(#c4c4c4, #fff 6px);
  color: #3d4f73;
  font-size: 8.700px;
}
.explorer span:first-child {
  margin-left: -3px;
}
.explorer i {
  width: 1px;
  height: 10px;
  margin: 0 6px 0 7px;
  background: #ddd;
}
/* menus */
.menu {
  position: absolute;
  background: #f0f0f0;
  border: 1px solid #a6a6a6;
  box-shadow: 2px 2px 3px rgba(0, 0, 0, 0.5);
  color: #1c1c1c;
  font-size: 8.500px;
}
.edit {
  left: 108px;
  top: 14px;
  width: 170.500px;
  height: 560px;
  padding: 0.700px 2px;
}
.pref {
  left: 274px;
  top: 384px;
  width: 125px;
  height: 200px;
  padding: 1.200px 1px;
}
.item {
  position: relative;
  height: 14.620px;
  display: flex;
  align-items: center;
  justify-content: space-between;
  padding: 0 10.500px 0 12px;
}
.pref .item {
  padding: 0 11px 0 13.500px;
}
.item kbd {
  font-family: inherit;
  font-size: 8.850px;
}
.item b {
  position: absolute;
  right: 3px;
  top: 4.500px;
  border: 3px solid transparent;
  border-left: 3.500px solid currentColor;
  border-right: 0;
}
.menu hr {
  height: 1px;
  margin: 2.500px 0 2.620px;
  border: 0;
  background: #a8a8a8;
}
.off {
  color: #6f6f6f;
}
.item.active {
  background: #0a78d7;
  color: #fff;
}
.overlay {
  position: absolute;
  left: 0;
  top: 0;
  width: 1000px;
  height: 560px;
}
.wm-bai {
  font: bold 39px "Liberation Sans", sans-serif;
  stroke: #cfcfcf;
  stroke-width: 0.800px;
}
.wm-du {
  font: bold 25px "Liberation Sans", sans-serif;
  fill: #4c4c4c;
}
.wm-cn {
  font: bold 30px "Noto Sans CJK SC", sans-serif;
}
.wm-url {
  font: 21px "Noto Sans", sans-serif;
  fill: #f0f0f0;
}
</style>
